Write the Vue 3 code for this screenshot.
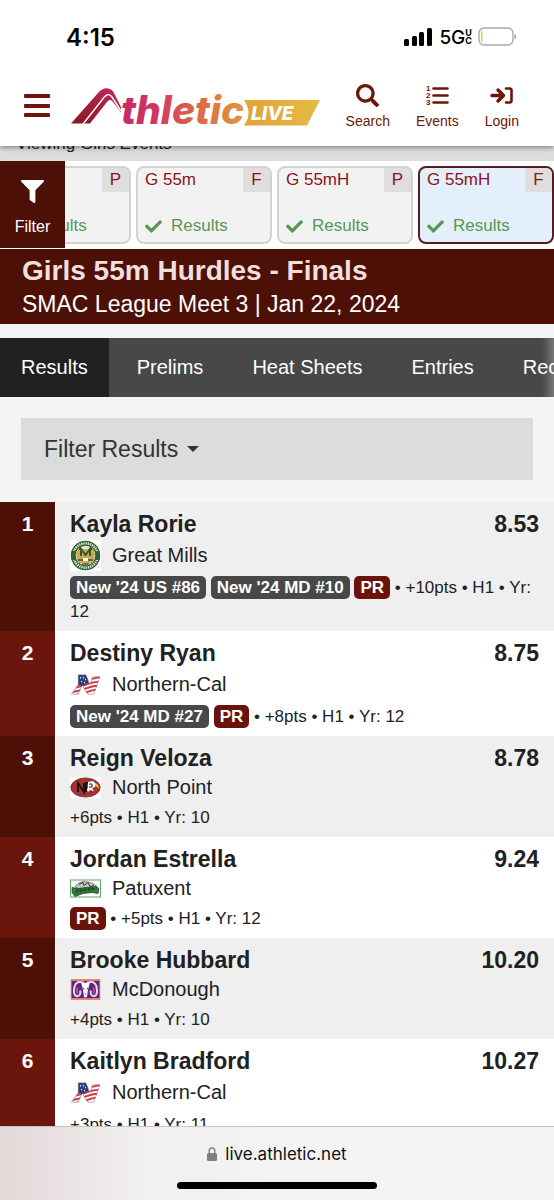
<script setup>
import { ref } from 'vue'

const activeTab = ref('Results')
const tabs = ['Results', 'Prelims', 'Heat Sheets', 'Entries', 'Records']

const events = [
  { id: 1, name: 'G 300m', round: 'P' },
  { id: 2, name: 'G 55m', round: 'F' },
  { id: 3, name: 'G 55mH', round: 'P' },
  { id: 4, name: 'G 55mH', round: 'F', active: true }
]

const results = [
  {
    place: 1,
    name: 'Kayla Rorie',
    school: 'Great Mills',
    logo: 'mills',
    mark: '8.53',
    badges: ["New '24 US #86", "New '24 MD #10"],
    pr: true,
    info: '+10pts • H1 • Yr: 12'
  },
  {
    place: 2,
    name: 'Destiny Ryan',
    school: 'Northern-Cal',
    logo: 'northern',
    mark: '8.75',
    badges: ["New '24 MD #27"],
    pr: true,
    info: '+8pts • H1 • Yr: 12'
  },
  {
    place: 3,
    name: 'Reign Veloza',
    school: 'North Point',
    logo: 'point',
    mark: '8.78',
    badges: [],
    info: '+6pts • H1 • Yr: 10'
  },
  {
    place: 4,
    name: 'Jordan Estrella',
    school: 'Patuxent',
    logo: 'patuxent',
    mark: '9.24',
    badges: [],
    pr: true,
    info: '+5pts • H1 • Yr: 12'
  },
  {
    place: 5,
    name: 'Brooke Hubbard',
    school: 'McDonough',
    logo: 'mcdonough',
    mark: '10.20',
    badges: [],
    info: '+4pts • H1 • Yr: 10'
  },
  {
    place: 6,
    name: 'Kaitlyn Bradford',
    school: 'Northern-Cal',
    logo: 'northern',
    mark: '10.27',
    badges: [],
    info: '+3pts • H1 • Yr: 11'
  }
]
</script>

<template>
  <div class="screen">
    <div class="status-bar">
      <span class="clock">4:15</span>
      <div class="status-right">
        <svg class="signal" viewBox="0 0 28 18">
          <rect x="0" y="11" width="5" height="7" rx="1.5" />
          <rect x="8" y="8" width="5" height="10" rx="1.5" />
          <rect x="15" y="4" width="5" height="14" rx="1.5" />
          <rect x="23" y="0" width="5" height="18" rx="1.5" />
        </svg>
        <span class="network">5G</span>
        <span class="carrier"><span>U</span><span>C</span></span>
        <svg class="battery" viewBox="0 0 39 20">
          <rect x="1" y="1" width="34" height="17" rx="5" fill="#fff" stroke="#aaa" stroke-width="1.4" />
          <rect x="3" y="4" width="1.5" height="11" rx="0.7" fill="#f3c83c" />
          <path d="M36.500 7v5.500c2-.8 2-4.700 0-5.500z" fill="#999" />
        </svg>
      </div>
    </div>

    <header class="app-header">
      <button class="menu" aria-label="Menu">
        <svg viewBox="0 0 26 28" fill="#6e1409">
          <rect y="1" width="26" height="4" rx="1" />
          <rect y="11" width="26" height="4" rx="1" />
          <rect y="20" width="26" height="4" rx="1" />
        </svg>
      </button>
      <a class="brand" href="#" aria-label="Athletic Live">
        <svg viewBox="0 0 250 40">
          <defs>
            <linearGradient id="mark" x1="0" y1="1" x2="1" y2="0">
              <stop offset="0" stop-color="#8a1525" />
              <stop offset="1" stop-color="#c5285a" />
            </linearGradient>
            <linearGradient id="word" gradientUnits="userSpaceOnUse" x1="52" y1="0" x2="176" y2="0">
              <stop offset="0" stop-color="#cb2a66" />
              <stop offset="0.25" stop-color="#cf3560" />
              <stop offset="0.55" stop-color="#dc6149" />
              <stop offset="1" stop-color="#e09a40" />
            </linearGradient>
            <linearGradient id="banner" x1="0" y1="0" x2="1" y2="0">
              <stop offset="0" stop-color="#e2a239" />
              <stop offset="1" stop-color="#e5bb45" />
            </linearGradient>
          </defs>
          <path
            d="M0 36.500L27 6Q32 .5 37 1.500Q41 2 43 6L50 20V25.500Q46 20 42 15Q39 11 36 15L19 36.500Z"
            fill="url(#mark)"
          />
          <path d="M12 37L31 13Q37 4 41 10L50 24" fill="none" stroke="#fff" stroke-width="1.4" />
          <path d="M173 13H249L236 38.500H173Q182 26 173 13Z" fill="url(#banner)" />
          <text class="word" x="50" y="37" fill="url(#word)">thletic</text>
          <text class="live" x="180" y="33" fill="#fff">LIVE</text>
        </svg>
      </a>
      <nav class="quick-nav">
        <a href="#">
          <svg viewBox="0 0 512 512">
            <path
              d="M505 442.700L405.300 343c-4.500-4.500-10.600-7-17-7H372c27.600-35.300 44-79.700 44-128C416 93.100 322.900 0 208 0S0 93.100 0 208s93.100 208 208 208c48.300 0 92.700-16.400 128-44v16.300c0 6.400 2.500 12.500 7 17l99.700 99.700c9.400 9.400 24.600 9.400 33.900 0l28.300-28.300c9.400-9.400 9.400-24.600.1-34zM208 344a136 136 0 1 1 0-272a136 136 0 1 1 0 272z"
              fill="currentColor"
            />
          </svg>
          Search
        </a>
        <a href="#">
          <svg viewBox="0 0 23 23">
            <path d="M7.500 4.500h14M7.500 11.500h14M7.500 18.500h14" stroke="currentColor" stroke-width="2.6" stroke-linecap="round" />
            <g class="digits" fill="currentColor">
              <text x="0" y="7">1</text>
              <text x="0" y="14">2</text>
              <text x="0" y="21">3</text>
            </g>
          </svg>
          Events
        </a>
        <a href="#">
          <svg viewBox="0 0 23 23" fill="none" stroke="currentColor" stroke-width="3.4" stroke-linecap="round" stroke-linejoin="round">
            <path d="M2 11.500H13M8 6l5.500 5.500L8 17" />
            <path d="M16 4.500h3.500Q21.500 4.500 21.500 6.500v10Q21.500 18.500 19.500 18.500H16" stroke-width="2.6" />
          </svg>
          Login
        </a>
      </nav>
    </header>

    <div class="viewing">Viewing Girls Events</div>

    <div class="event-strip">
      <button class="filter-btn">
        <svg viewBox="0 0 512 512">
          <path
            d="M487.976 0H24.028C2.710 0-8.047 25.866 7.058 40.971L192 225.941V432c0 7.831 3.821 15.170 10.237 19.662l80 55.980C298.020 518.690 320 507.493 320 487.980V225.941l184.947-184.970C520.021 25.896 509.338 0 487.976 0z"
            fill="#fff"
          />
        </svg>
        Filter
      </button>
      <div class="cards">
        <a v-for="event in events" :key="event.id" href="#" class="card" :class="{ active: event.active }">
          <span class="card-top">
            <span class="card-name">{{ event.name }}</span>
            <span class="round">{{ event.round }}</span>
          </span>
          <span class="card-status">
            <svg viewBox="0 0 512 512">
              <path
                d="M173.898 439.404l-166.400-166.400c-9.997-9.997-9.997-26.206 0-36.204l36.203-36.204c9.997-9.998 26.207-9.998 36.204 0L192 312.690 432.095 72.596c9.997-9.997 26.207-9.997 36.204 0l36.203 36.204c9.997 9.997 9.997 26.206 0 36.204l-294.400 294.401c-9.998 9.997-26.207 9.997-36.204-.001z"
                fill="currentColor"
              />
            </svg>
            Results
          </span>
        </a>
      </div>
    </div>

    <div class="event-title">
      <h1>Girls 55m Hurdles - Finals</h1>
      <p>SMAC League Meet 3 | Jan 22, 2024</p>
    </div>

    <nav class="tabs">
      <button v-for="tab in tabs" :key="tab" :class="{ active: tab === activeTab }" @click="activeTab = tab">
        {{ tab }}
      </button>
    </nav>

    <button class="filter-results">
      Filter Results
      <span class="caret"></span>
    </button>

    <ol class="results">
      <li v-for="result in results" :key="result.place">
        <span class="place">{{ result.place }}</span>
        <div class="entry">
          <div class="entry-head">
            <a href="#">{{ result.name }}</a>
            <span>{{ result.mark }}</span>
          </div>
          <div class="school">
            <svg v-if="result.logo === 'mills'" class="logo tall" viewBox="0 0 31 31">
              <rect width="31" height="31" fill="#fff" />
              <circle cx="15.500" cy="15.500" r="14.700" fill="#2f6134" />
              <circle cx="15.500" cy="15.500" r="12.200" fill="none" stroke="#e9edda" stroke-width="2.400" stroke-dasharray="1.300 0.900" />
              <path d="M3.500 11v9M27.500 11v9" stroke="#2f6134" stroke-width="4" />
              <circle cx="15.500" cy="15.500" r="9.800" fill="#eee5b5" />
              <path d="M8 9h15l2 5-2 9H8l-2-9z" fill="#d5a74c" />
              <path d="M11 16V9l4.500 6L20 9v7M9 9h3M19 9h3" fill="none" stroke="#315a3d" stroke-width="2" />
              <path d="M8 20h5M18 20h5M12 24h7" stroke="#315a3d" stroke-width="1.500" />
              <path d="M13 18h5v3h-5z" fill="#fff" />
            </svg>
            <svg v-else-if="result.logo === 'northern'" class="logo tall" viewBox="0 0 31 32">
              <defs>
                <clipPath :id="'flag-' + result.place">
                  <path d="M8 6H16L20 16L23 8H30.500L24 26H18L12 17L8 26H1L8 16Z" />
                </clipPath>
              </defs>
              <g :clip-path="`url(#flag-${result.place})`">
                <rect width="31" height="32" fill="#fdf6f6" />
                <path
                  d="M0 20q8-1 16-4t15-3M0 24q8-1 16-4t15-3M0 28q8-1 16-4t15-3M12 32q8-3 19-7M16 11q8-1 15-3"
                  fill="none"
                  stroke="#cf3a43"
                  stroke-width="2"
                />
                <path d="M6 5h10l3 9-6 3H6z" fill="#2c407e" />
                <path d="M10 9h1M13 9h1M15 11h1M11 13h1M14 14h1" stroke="#fff" stroke-width="1.400" />
              </g>
              <path
                d="M8 6H16L20 16L23 8H30.500L24 26H18L12 17L8 26H1L8 16Z"
                fill="none"
                stroke="#6d6272"
                stroke-width="0.500"
              />
            </svg>
            <svg v-else-if="result.logo === 'point'" class="logo short" viewBox="0 0 31 21">
              <rect width="31" height="21" fill="#fff" />
              <ellipse cx="15.500" cy="10.500" rx="14.700" ry="9.600" fill="#a92e35" stroke="#5b3032" stroke-width="0.800" />
              <path d="M8 15V6l6 9V6M16 15V6h3" fill="none" stroke="#1c1516" stroke-width="2" />
              <path d="M18 5l5-1 3 3-1 3-3 1 2 3-4-1-2 2-1-2 1-3z" fill="#fff" />
              <path d="M25 6q4 1 4 6l-3-3z" fill="#edc545" />
              <path d="M19 7h3v3h-3" fill="none" stroke="#222" />
            </svg>
            <svg v-else-if="result.logo === 'patuxent'" class="logo short" viewBox="0 0 31 18">
              <rect x="0.500" y="0.500" width="30" height="17" fill="#fff" stroke="#65a367" />
              <path d="M5 7q4-5 9-5 9 1 13 5l-5 2H8z" fill="#c4cbc4" stroke="#555" stroke-width="0.700" />
              <path d="M9 5l4-2 1 3 4-3 2 4 4-1" fill="none" stroke="#333" />
              <path d="M2 8l6 1 8-1 10-1 3 2-1 5-6-1-9 1-8 3-3-4z" fill="#2e7d3c" stroke="#183e20" stroke-width="0.700" />
              <path d="M5 12l20-3M7 9v5M11 9v4M15 8v4M19 8v4M23 8v3" stroke="#1d3924" stroke-width="0.800" />
            </svg>
            <svg v-else class="logo short" viewBox="0 0 31 22">
              <rect width="31" height="22" fill="#e58a6c" />
              <rect x="1" y="2" width="29" height="18" fill="#5f2381" />
              <path
                d="M14 4Q6 1 4 8q-2 8 2 10 5 0 4-6M17 4q8-3 10 4 2 8-2 10-5 0-4-6"
                fill="none"
                stroke="#e6d3e2"
                stroke-width="2.200"
              />
              <path d="M7 9q-1 4 0 6M24 9q1 4 0 6" fill="none" stroke="#d98a86" stroke-width="1.200" />
              <path d="M11 4h9l-2 8-1 7h-3l-1-7z" fill="#fff" />
              <path d="M13 9l1 2M18 9l-1 2M15 16h1" stroke="#5f2381" />
            </svg>
            <a href="#">{{ result.school }}</a>
          </div>
          <p class="meta">
            <template v-for="badge in result.badges" :key="badge"
              ><span class="badge">{{ badge }}</span
              >{{ ' ' }}</template
            ><template v-if="result.pr"><span class="badge pr">PR</span> • </template>{{ result.info }}
          </p>
        </div>
      </li>
    </ol>

    <footer class="browser-bar">
      <div class="address">
        <svg viewBox="0 0 10 14">
          <rect x="0" y="6" width="10" height="8" rx="1.500" fill="#808083" />
          <path d="M2.200 6.500V4q0-3 2.800-3t2.800 3v2.500" fill="none" stroke="#808083" stroke-width="1.400" />
        </svg>
        live.athletic.net
      </div>
      <div class="home-indicator"></div>
    </footer>
  </div>
</template>

<style>
body {
  margin: 0;
  background: #f4f4f4;
}
</style>

<style scoped>
.screen {
  display: flex;
  flex-direction: column;
  height: 100vh;
  overflow: hidden;
  background: #f4f4f4;
  color: #212121;
  font-family: 'Liberation Sans', Arial, sans-serif;
}

.screen * {
  box-sizing: border-box;
}

.screen > * {
  flex-shrink: 0;
}

a {
  color: inherit;
  text-decoration: none;
}

button {
  border: 0;
  padding: 0;
  font-family: inherit;
  cursor: pointer;
}

svg {
  display: block;
}

.status-bar {
  position: relative;
  z-index: 2;
  display: flex;
  align-items: center;
  justify-content: space-between;
  height: 74px;
  padding: 0 37px 0 66px;
  background: #fff;
  color: #000;
  font-family: Inter, sans-serif;
}

.clock {
  font-size: 24px;
  font-weight: 600;
}

.status-right {
  display: flex;
  align-items: center;
}

.signal {
  width: 28px;
  height: 18px;
  margin-right: 7px;
}

.network {
  font-size: 19px;
  font-weight: 500;
}

.carrier {
  display: flex;
  flex-direction: column;
  margin-right: 6px;
  font-size: 9px;
  font-weight: 700;
  line-height: 8px;
}

.battery {
  width: 39px;
  height: 20px;
}

.app-header {
  position: relative;
  z-index: 1;
  display: flex;
  align-items: center;
  height: 72px;
  padding: 10px 35px 17px 24px;
  background: #fff;
  box-shadow: 0 1px 6px rgba(0, 0, 0, 0.5);
}

.menu {
  background: none;
}

.menu svg {
  width: 26px;
  height: 28px;
}

.brand {
  margin-left: 21px;
}

.brand svg {
  width: 250px;
  height: 40px;
}

.word {
  font-family: Inter, sans-serif;
  font-size: 39px;
  font-style: italic;
  font-weight: 800;
}

.live {
  font-family: Inter, sans-serif;
  font-size: 19px;
  font-style: italic;
  font-weight: 800;
}

.quick-nav {
  display: flex;
  gap: 26px;
  margin-left: auto;
  color: #6e1409;
}

.quick-nav a {
  display: flex;
  flex-direction: column;
  align-items: center;
  gap: 6px;
  font-size: 14px;
  line-height: 16px;
}

.quick-nav svg {
  width: 23px;
  height: 23px;
}

.digits {
  font-size: 8px;
  font-weight: 700;
}

.viewing {
  display: flex;
  align-items: flex-end;
  height: 15px;
  padding: 0 16px 8px;
  overflow: hidden;
  background: #dedede;
  font-size: 17px;
  line-height: 18px;
}

.event-strip {
  display: flex;
  height: 88px;
  background: #fff;
}

.filter-btn {
  display: flex;
  flex-direction: column;
  align-items: center;
  gap: 15px;
  width: 65px;
  height: 87px;
  padding-top: 19px;
  background: #4d1007;
  color: #fff;
  font-size: 16px;
  line-height: 18px;
}

.filter-btn svg {
  width: 23px;
  height: 23px;
}

.cards {
  display: flex;
  flex: 1;
  justify-content: flex-end;
  gap: 5px;
  padding: 5px 0;
  overflow: hidden;
}

.card {
  display: flex;
  flex-direction: column;
  flex-shrink: 0;
  justify-content: space-between;
  width: 136px;
  overflow: hidden;
  border: 2px solid #d2d2d2;
  border-radius: 8px;
  background: #f2f2f2;
  font-size: 17px;
  line-height: 24px;
}

.card.active {
  border-color: #571c22;
  background: #e3effa;
}

.card-top {
  display: flex;
  justify-content: space-between;
  color: #8b1518;
}

.card-name {
  padding-left: 7px;
}

.round {
  width: 27px;
  background: #dedede;
  text-align: center;
}

.card-status {
  display: flex;
  align-items: center;
  gap: 9px;
  padding: 0 7px 4px;
  color: #559855;
}

.card-status svg {
  width: 17px;
  height: 17px;
}

.event-title {
  height: 75px;
  padding: 5px 22px 0;
  background: #4d1007;
  color: #fff;
}

.event-title h1 {
  margin: 0;
  color: #f0dfdd;
  font-size: 28px;
  line-height: 34px;
}

.event-title p {
  margin: 0;
  font-size: 23px;
  line-height: 32px;
}

.tabs {
  display: flex;
  gap: 7px;
  margin-top: 14px;
  overflow: hidden;
  background: linear-gradient(to left, #777, #484848 12px);
}

.tabs button {
  flex-shrink: 0;
  height: 59px;
  padding: 0 21px;
  background: none;
  color: #fff;
  font-size: 20px;
}

.tabs button.active {
  background: #212121;
}

.filter-results {
  display: flex;
  align-items: center;
  gap: 9px;
  height: 62px;
  margin: 21px 21px 22px;
  padding: 0 23px;
  background: #dcdcdc;
  color: #333;
  font-size: 23px;
}

.caret {
  border: 6px solid transparent;
  border-top-color: #333;
  border-bottom: 0;
}

.screen > .results {
  flex: 1;
  min-height: 0;
  margin: 0;
  padding: 0;
  overflow: hidden;
  list-style: none;
}

.results li {
  display: flex;
  background: #fff;
}

.results li:nth-child(odd) {
  background: #efefef;
}

.place {
  width: 55px;
  padding-top: 8px;
  background: #6b160c;
  color: #fff;
  font-size: 21px;
  font-weight: 700;
  line-height: 28px;
  text-align: center;
}

.results li:nth-child(odd) .place {
  background: #4d1007;
}

.entry {
  flex: 1;
  min-width: 0;
  padding: 8px 15px 7px 14px;
  border-left: 1px solid #fff;
}

.entry-head {
  display: flex;
  justify-content: space-between;
  font-size: 23px;
  font-weight: 700;
  line-height: 28px;
}

.school {
  display: flex;
  align-items: center;
  gap: 11px;
  min-height: 31px;
  font-size: 20px;
}

.logo {
  width: 31px;
}

.logo.tall {
  height: 31px;
  margin: 2px 0;
}

.logo.short {
  height: 21px;
}

.meta {
  margin: 0;
  padding-top: 3px;
  font-size: 17px;
  line-height: 24px;
}

.badge {
  display: inline-block;
  padding: 0 6px;
  border-radius: 5px;
  background: #484848;
  color: #fff;
  font-weight: 700;
  line-height: 23px;
}

.badge.pr {
  background: #6b120b;
}

.browser-bar {
  display: flex;
  flex-direction: column;
  align-items: center;
  justify-content: space-between;
  height: 74px;
  padding: 16px 0 11px;
  border-top: 1px solid #c4c4c4;
  background: linear-gradient(to right, #e2d8d7, #f1efef 25%, #f4f4f4 50%);
}

.address {
  display: flex;
  align-items: center;
  gap: 8px;
  color: #111;
  font-family: Inter, sans-serif;
  font-size: 17px;
  line-height: 22px;
}

.address svg {
  width: 10px;
  height: 14px;
}

.home-indicator {
  width: 36%;
  height: 7px;
  border-radius: 4px;
  background: #000;
}
</style>
